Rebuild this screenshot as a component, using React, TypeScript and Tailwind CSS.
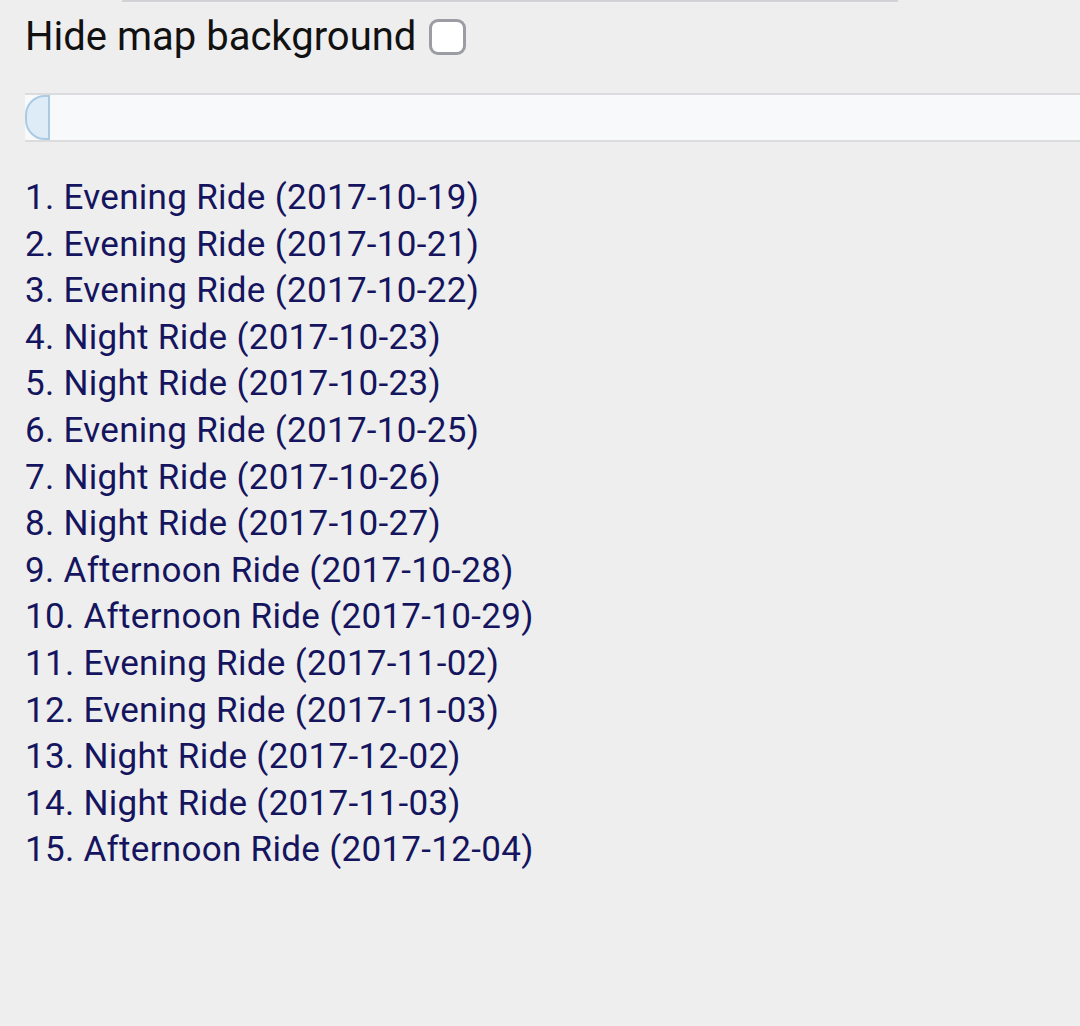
const RIDES = [
  "Evening Ride (2017-10-19)",
  "Evening Ride (2017-10-21)",
  "Evening Ride (2017-10-22)",
  "Night Ride (2017-10-23)",
  "Night Ride (2017-10-23)",
  "Evening Ride (2017-10-25)",
  "Night Ride (2017-10-26)",
  "Night Ride (2017-10-27)",
  "Afternoon Ride (2017-10-28)",
  "Afternoon Ride (2017-10-29)",
  "Evening Ride (2017-11-02)",
  "Evening Ride (2017-11-03)",
  "Night Ride (2017-12-02)",
  "Night Ride (2017-11-03)",
  "Afternoon Ride (2017-12-04)",
];

export default function App() {
  return (
    <div className="min-h-[1026px] w-[1080px] overflow-hidden bg-[#eeeeee] font-['Roboto',sans-serif]">
      {/* edge of the map above */}
      <div className="ml-[122px] h-[3px] w-[776px] border-t-2 border-[#d2d2d6] bg-[#f1f1f1]" />

      <div className="pl-[25px]">
        {/* Hide map toggle */}
        <label className="mt-[12px] flex h-[44px] items-center gap-[13px] text-[40px] leading-none text-[#111111]">
          <span>Hide map background</span>
          <span className="h-[36px] w-[37px] shrink-0 rounded-[9px] border-[3px] border-[#9c9ca4] bg-white" />
        </label>

        {/* time slider */}
        <div className="mt-[34px] flex h-[49px] w-[1100px] border-y-2 border-[#dcdcde] bg-[#f8f9fb]">
          <div className="h-full w-[25px] rounded-l-[20px] border-2 border-[#abcbe3] bg-[#deecf8]" />
        </div>

        {/* ride list */}
        <ol className="mt-[33px] text-[35px] leading-[46.6px] tracking-[0.3px] text-[#15155f]">
          {RIDES.map((ride, i) => (
            <li key={i}>
              {i + 1}. {ride}
            </li>
          ))}
        </ol>
      </div>
    </div>
  );
}
